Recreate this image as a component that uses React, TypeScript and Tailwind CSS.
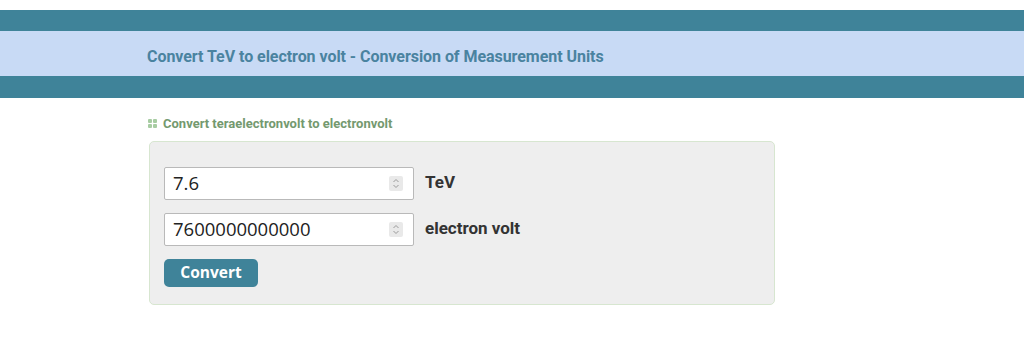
export default function App() {
  return (
    <div className="w-[1024px] h-[347px] bg-white font-['Open_Sans',sans-serif]">
      <div className="h-[10px]" />
      <div className="h-[21px] bg-[#3f8399]" />
      <div className="h-[45px] bg-[#c8daf5] flex items-center pl-[147px] pt-[6px]">
        <h1 className="font-['Roboto',sans-serif] font-bold text-[16px] text-[#4a83a0] tracking-[-0.05px]">
          Convert TeV to electron volt - Conversion of Measurement Units
        </h1>
      </div>
      <div className="h-[22px] bg-[#3f8399]" />

      <div className="ml-[148px] mt-[16px] flex items-center gap-[6px]">
        <span className="grid grid-cols-2 gap-[1px]">
          <span className="w-[4px] h-[4px] rounded-[1px] bg-[#a7cca2]" />
          <span className="w-[4px] h-[4px] rounded-[1px] bg-[#a7cca2]" />
          <span className="w-[4px] h-[4px] rounded-[1px] bg-[#a7cca2]" />
          <span className="w-[4px] h-[4px] rounded-[1px] bg-[#a7cca2]" />
        </span>
        <span className="font-['Roboto',sans-serif] font-bold text-[13px] text-[#74996f]">
          Convert teraelectronvolt to electronvolt
        </span>
      </div>

      <div className="ml-[149px] mt-[7px] w-[626px] h-[164px] bg-[#eeeeee] border border-[#d7e6d0] rounded-[5px] px-[14px] pt-[25px]">
        <Row value="7.6" unit="TeV" />
        <div className="h-[13px]" />
        <Row value="7600000000000" unit="electron volt" />
        <button className="mt-[13px] w-[94px] h-[28px] rounded-[5px] bg-[#3f8399] text-white font-bold text-[15.5px] leading-none">
          Convert
        </button>
      </div>
    </div>
  )
}

function Row({ value, unit }: { value: string; unit: string }) {
  return (
    <div className="flex items-center">
      <div className="relative w-[250px] h-[33px] bg-white border border-[#b9b9b9] rounded-[2px] flex items-center pl-[8px]">
        <span className="text-[18.5px] text-[#222]">{value}</span>
        <span className="absolute right-[10px] top-[8px] w-[14px] h-[15px] bg-[#e9e9e9] rounded-[2px] flex flex-col items-center justify-center">
          <svg width="8" height="11" viewBox="0 0 8 11" fill="none" stroke="#9a9a9a" strokeWidth="1">
            <path d="M1.5 4 L4 1.5 L6.5 4" />
            <path d="M1.5 7 L4 9.5 L6.5 7" />
          </svg>
        </span>
      </div>
      <span className="ml-[11px] font-['Roboto',sans-serif] font-bold text-[17px] text-[#333]">{unit}</span>
    </div>
  )
}
